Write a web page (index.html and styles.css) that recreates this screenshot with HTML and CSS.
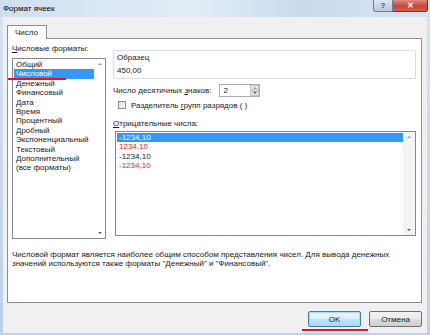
FILE: index.html
```html
<!DOCTYPE html>
<html lang="ru">
<head>
    <meta charset="UTF-8">
    <title>Формат ячеек</title>
    <link rel="stylesheet" href="styles.css">
</head>
<body>

<div class="window">
    <div class="titlebar">
        <span class="title">Формат ячеек</span>
        <div class="caption-btns">
            <span class="cap-btn help">?</span>
            <span class="cap-btn close">✕</span>
        </div>
    </div>

    <div class="body">
        <div class="tabs">
            <div class="tab">Число</div>
        </div>

        <div class="panel">
            <div class="cols">
                <!-- left column: format list -->
                <div class="left">
                    <div class="label"><u>Ч</u>исловые форматы:</div>
                    <div class="listbox formats">
                        <ul class="items">
                            <li>Общий</li>
                            <li class="selected">Числовой</li>
                            <li>Денежный</li>
                            <li>Финансовый</li>
                            <li>Дата</li>
                            <li>Время</li>
                            <li>Процентный</li>
                            <li>Дробный</li>
                            <li>Экспоненциальный</li>
                            <li>Текстовый</li>
                            <li>Дополнительный</li>
                            <li>(все форматы)</li>
                        </ul>
                        <div class="scroll">
                            <span class="arrow up"></span>
                            <span class="arrow down"></span>
                        </div>
                        <span class="mark mark-list"></span>
                    </div>
                </div>

                <!-- right column: options -->
                <div class="right">
                    <div class="sample">
                        <div class="sample-title">Образец</div>
                        <div class="sample-value">450,00</div>
                    </div>

                    <div class="row decimals">
                        <span>Число десятичных <u>з</u>наков:</span>
                        <div class="spin">
                            <span class="spin-value">2</span>
                            <div class="spin-btns">
                                <span class="spin-btn"><span class="arrow up"></span></span>
                                <span class="spin-btn"><span class="arrow down"></span></span>
                            </div>
                        </div>
                    </div>

                    <div class="row check-row">
                        <span class="checkbox"></span>
                        <span>Разделитель <u>г</u>рупп разрядов ( )</span>
                    </div>

                    <div class="label neg-label"><u>О</u>трицательные числа:</div>
                    <div class="listbox negatives">
                        <ul class="items">
                            <li class="selected">-1234,10</li>
                            <li class="red">1234,10</li>
                            <li>-1234,10</li>
                            <li class="red">-1234,10</li>
                        </ul>
                        <div class="scroll">
                            <span class="arrow up"></span>
                            <span class="arrow down"></span>
                        </div>
                    </div>
                </div>
            </div>

            <p class="desc">Числовой формат является наиболее общим способом представления чисел. Для вывода денежных значений используются также форматы "Денежный" и "Финансовый".</p>
        </div>

        <div class="footer">
            <div class="btn-wrap">
                <button class="btn default">OK</button>
                <span class="mark mark-ok"></span>
            </div>
            <button class="btn">Отмена</button>
        </div>
    </div>
</div>

</body>
</html>
```

FILE: styles.css
```css
/* Page */
body {
    margin: 0;
    background: #ffffff;
    font-family: "Liberation Sans", Arial, sans-serif;
    font-size: 8px;
    color: #1a1a1a;
}

u {
    text-decoration: underline;
}

/* Window frame */
.window {
    width: 430px;
    height: 335px;
    background: linear-gradient(180deg, #d6e4f2, #bcd0e6);
    box-sizing: border-box;
    padding: 0 3px 2px 3px;
    display: flex;
    flex-direction: column;
}

.titlebar {
    height: 17px;
    display: flex;
    justify-content: space-between;
    align-items: flex-start;
    margin: 0 -3px;
    padding: 0 3px;
    background: linear-gradient(90deg, #cfdff0 0%, #e3edf7 45%, #c9dbee 70%, #d7e5f3 100%);
}

.title {
    font-size: 8px;
    line-height: 17px;
    color: #000;
}

.caption-btns {
    display: flex;
    margin-right: -1px;
}

.cap-btn {
    height: 12px;
    display: flex;
    align-items: center;
    justify-content: center;
    font-size: 8px;
    border: 1px solid #6d7d92;
    border-top: none;
    box-sizing: border-box;
}

.help {
    width: 20px;
    color: #3a4a5e;
    font-weight: bold;
    background: linear-gradient(#dfe7f0, #b9c8d8);
    border-radius: 0 0 0 3px;
}

.close {
    width: 35px;
    color: #fff;
    font-weight: bold;
    background: linear-gradient(#e08a7c, #c6463a 55%, #d8604f);
    border-left: none;
    border-color: #7b2f28;
    border-radius: 0 0 3px 0;
}

/* Dialog body */
.body {
    flex: 1;
    background: #f0f0f0;
    padding: 8px 5px 0 4px;
    display: flex;
    flex-direction: column;
}

.tabs {
    display: flex;
    height: 13px;
    position: relative;
    z-index: 1;
}

.tab {
    width: 40px;
    box-sizing: border-box;
    border: 1px solid #8e8f8f;
    border-bottom: none;
    background: #fff;
    padding-left: 7px;
    line-height: 13px;
    height: 14px;
}

.panel {
    height: 265px;
    box-sizing: border-box;
    background: #fff;
    border: 1px solid #8e8f8f;
    padding: 5px 4px 0 4px;
}

.cols {
    display: flex;
    gap: 7px;
}

.label {
    line-height: 10px;
    height: 10px;
}

/* List boxes */
.listbox {
    position: relative;
    display: flex;
    border: 1px solid #828790;
    box-sizing: border-box;
    background: #fff;
}

.items {
    list-style: none;
    margin: 0;
    padding: 1px;
    flex: 1;
}

.items li {
    height: 9.4px;
    line-height: 9.4px;
    padding-left: 2px;
    white-space: nowrap;
}

.items li.selected {
    background: #3399ff;
    color: #fff;
}

.items li.red {
    color: #d7262b;
}

.scroll {
    width: 12px;
    background: #f4f4f4;
    display: flex;
    flex-direction: column;
    justify-content: space-between;
    align-items: center;
    padding: 4px 0;
}

.arrow {
    width: 0;
    height: 0;
    border-left: 2px solid transparent;
    border-right: 2px solid transparent;
}

.arrow.up {
    border-bottom: 2px solid #9a9a9a;
}

.arrow.down {
    border-top: 2px solid #606060;
}

.formats {
    width: 94px;
    height: 181px;
    margin-top: 4px;
}

.formats .scroll {
    width: 10px;
    background: #fff;
}

/* Red annotation marks */
.mark {
    position: absolute;
    height: 2px;
    background: #e3141c;
}

.mark-list {
    left: -5px;
    top: 19px;
    width: 58px;
}

.mark-ok {
    left: -6px;
    bottom: -4px;
    width: 66px;
}

/* Right column */
.right {
    flex: 1;
    margin-right: 1px;
}

.sample {
    height: 29px;
    margin-top: 6px;
    border: 1px solid #dcdcdc;
    border-radius: 2px;
    box-sizing: border-box;
    padding: 2px 3px;
}

.sample-title {
    line-height: 10px;
}

.sample-value {
    line-height: 10px;
    margin-top: 3px;
}

.row {
    display: flex;
    align-items: center;
}

.decimals {
    margin-top: 5px;
    height: 13px;
    gap: 8px;
}

.spin {
    width: 41px;
    height: 13px;
    box-sizing: border-box;
    border: 1px solid #abadb3;
    display: flex;
    justify-content: space-between;
}

.spin-value {
    padding-left: 3px;
    line-height: 11px;
}

.spin-btns {
    width: 9px;
    display: flex;
    flex-direction: column;
}

.spin-btn {
    flex: 1;
    display: flex;
    align-items: center;
    justify-content: center;
    background: linear-gradient(#f2f2f2, #dcdcdc);
    border: 1px solid #c5c5c5;
    box-sizing: border-box;
}

.check-row {
    margin-top: 3px;
    height: 10px;
    gap: 5px;
    padding-left: 5px;
}

.checkbox {
    width: 8px;
    height: 8px;
    box-sizing: border-box;
    border: 1px solid #8f8f8f;
    background: linear-gradient(135deg, #dcdcdc, #fafafa);
}

.neg-label {
    margin-top: 9px;
}

.negatives {
    height: 105px;
    margin-top: 2px;
    margin-left: 2px;
}

.negatives .items li.selected {
    margin-right: -1px;
}

/* Description */
.desc {
    margin: 11px 0 0 0;
    line-height: 9px;
}

/* Buttons */
.footer {
    display: flex;
    justify-content: flex-end;
    gap: 8px;
    margin-top: 8px;
}

.btn-wrap {
    position: relative;
}

.btn {
    width: 53px;
    height: 16px;
    padding: 0;
    font-family: inherit;
    font-size: 8px;
    color: #1a1a1a;
    border: 1px solid #707070;
    border-radius: 2px;
    background: linear-gradient(#f2f2f2 0%, #ebebeb 50%, #dddddd 51%, #cfcfcf 100%);
}

.btn.default {
    border-color: #3c7fb1;
    box-shadow: inset 0 0 0 1px #a6dcf5;
    background: linear-gradient(#eaf6fd 0%, #d9f0fc 50%, #bee6fd 51%, #a7d9f5 100%);
}
```
